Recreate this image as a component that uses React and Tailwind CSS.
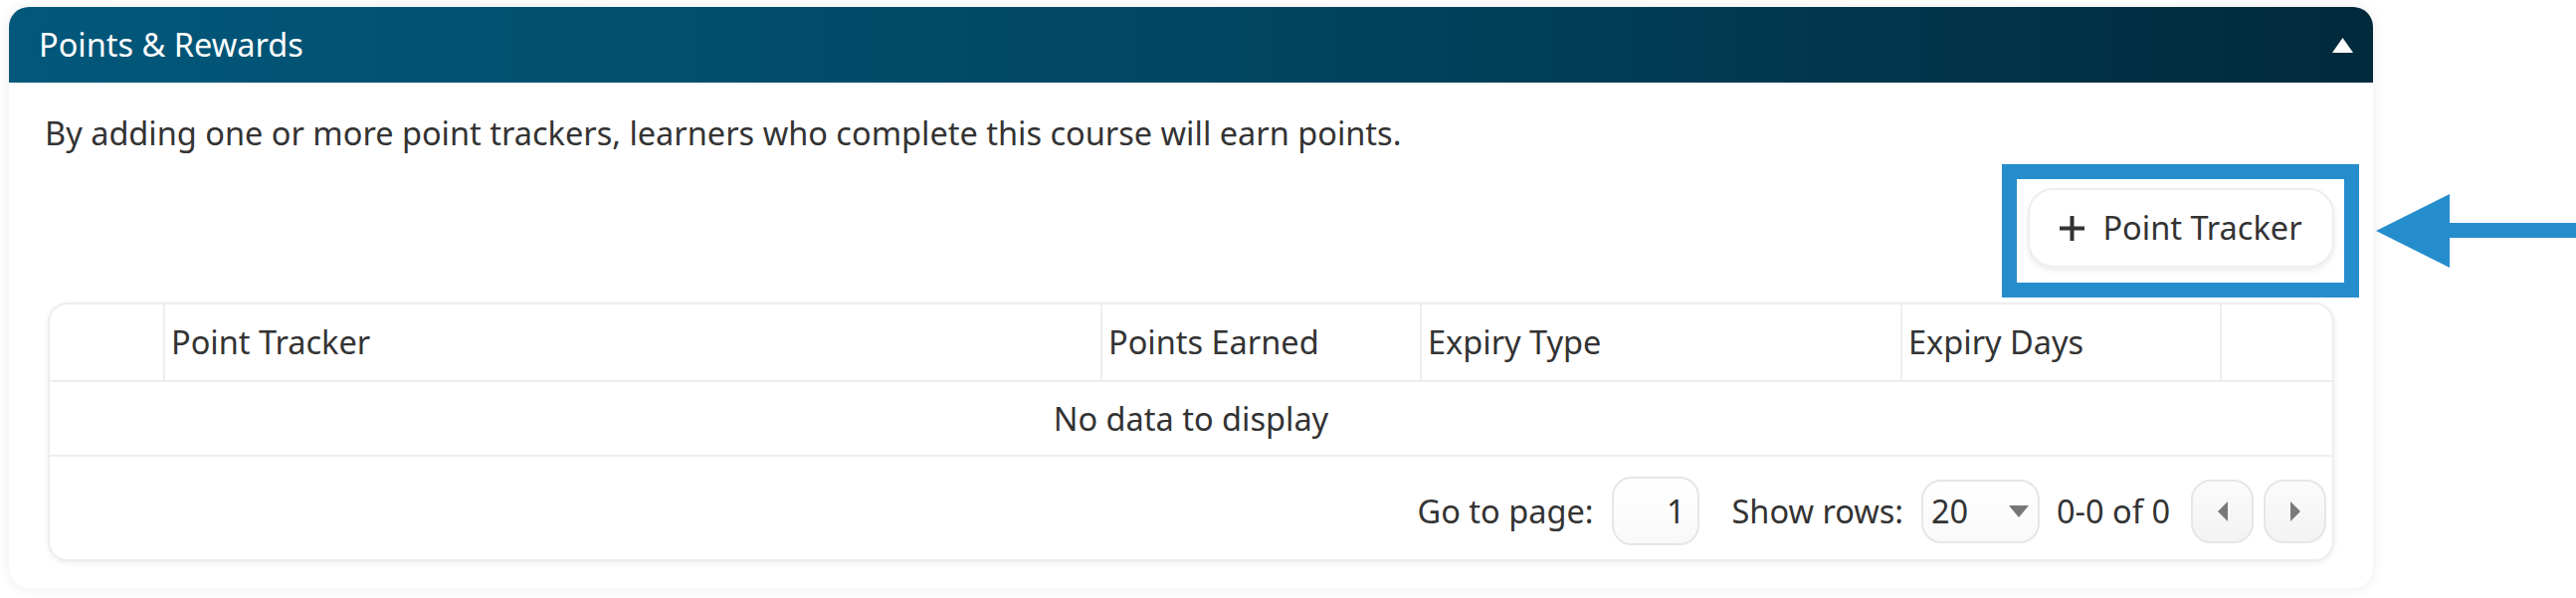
import React from 'react';

const columns = [
  { label: '', width: 'w-[116px]' },
  { label: 'Point Tracker', width: 'w-[942px]' },
  { label: 'Points Earned', width: 'w-[321px]' },
  { label: 'Expiry Type', width: 'w-[483px]' },
  { label: 'Expiry Days', width: 'w-[321px]' },
  { label: '', width: 'flex-1' },
];

function Triangle({ dir, className }) {
  // small solid triangles used in the pager and header
  const pts = {
    up: '0,15 10.5,0 21,15',
    down: '0,0 20,0 10,12',
    left: '10,0 10,20 0,10',
    right: '0,0 0,20 10,10',
  }[dir];
  const size = {
    up: [21, 15],
    down: [20, 12],
    left: [10, 20],
    right: [10, 20],
  }[dir];
  return (
    <svg width={size[0]} height={size[1]} viewBox={`0 0 ${size[0]} ${size[1]}`} className={className}>
      <polygon points={pts} fill="currentColor" />
    </svg>
  );
}

export default function App() {
  return (
    <div className="relative h-[601px] w-full overflow-hidden bg-white font-['Noto_Sans',sans-serif] text-[32.5px] leading-[44px] text-[#333333]">
      {/* card */}
      <div className="ml-[9px] mt-[7px] flex h-[584px] w-[2376px] flex-col rounded-[20px] bg-white shadow-[0_0_14px_rgba(0,0,0,0.08)]">
        <div className="flex h-[76px] shrink-0 items-center justify-between rounded-t-[20px] bg-gradient-to-r from-[#02587b] via-[#014763] to-[#012a3c] pl-[30px] pr-[20px] text-white">
          <span>Points &amp; Rewards</span>
          <Triangle dir="up" className="text-white" />
        </div>

        <div className="flex flex-1 flex-col px-[39px] pb-[27px]">
          <p className="-ml-[3px] mt-[29px]">
            By adding one or more point trackers, learners who complete this course will earn points.
          </p>

          <div className="mt-[33px] flex justify-end">
            <button className="flex h-[80px] w-[308px] items-center justify-center gap-[18px] rounded-[26px] border-2 border-[#eeeeee] bg-white shadow-[0_3px_6px_rgba(0,0,0,0.08)]">
              <svg width="25" height="25" viewBox="0 0 25 25">
                <path d="M12.5 0v25M0 12.5h25" stroke="#333" strokeWidth="4" />
              </svg>
              <span>Point Tracker</span>
            </button>
          </div>

          {/* table */}
          <div className="mt-[35px] flex h-[260px] flex-col overflow-hidden rounded-[20px] border-2 border-[#eeeeee] bg-white shadow-[0_2px_6px_rgba(0,0,0,0.07)]">
            <div className="flex h-[78px] shrink-0 border-b-2 border-[#eeeeee]">
              {columns.map((c, i) => (
                <div
                  key={i}
                  className={`${c.width} flex items-center pl-[6px] ${i < columns.length - 1 ? 'border-r-2 border-[#eeeeee]' : ''}`}
                >
                  {c.label}
                </div>
              ))}
            </div>
            <div className="flex h-[75px] shrink-0 items-center justify-center border-b-2 border-[#eeeeee]">
              No data to display
            </div>
            <div className="flex flex-1 items-center justify-end pr-[6px] pt-[6px]">
              <span>Go to page:</span>
              <div className="ml-[19px] flex h-[69px] w-[88px] items-center justify-end rounded-[20px] border-2 border-[#e6e6e6] bg-gradient-to-b from-white to-[#f9f9f9] pr-[13px]">
                1
              </div>
              <span className="ml-[32px]">Show rows:</span>
              <div className="ml-[18px] flex h-[64px] w-[119px] items-center justify-between rounded-[20px] border-2 border-[#e6e6e6] bg-gradient-to-b from-white to-[#f9f9f9] pl-[8px] pr-[9px]">
                <span>20</span>
                <Triangle dir="down" className="text-[#777777]" />
              </div>
              <span className="ml-[17px]">0-0 of 0</span>
              <div className="ml-[21px] flex h-[64px] w-[63px] items-center justify-center rounded-[20px] border-2 border-[#e6e6e6] bg-gradient-to-b from-[#fbfbfb] to-[#f3f3f3]">
                <Triangle dir="left" className="text-[#7a7a7a]" />
              </div>
              <div className="ml-[10px] flex h-[64px] w-[63px] items-center justify-center rounded-[20px] border-2 border-[#e6e6e6] bg-gradient-to-b from-[#fbfbfb] to-[#f3f3f3]">
                <Triangle dir="right" className="text-[#7a7a7a]" />
              </div>
            </div>
          </div>
        </div>
      </div>

      {/* annotation: highlight box and arrow */}
      <div className="absolute left-[2012px] top-[165px] h-[134px] w-[359px] border-[15px] border-[#268dcd]" />
      <svg className="absolute left-[2388px] top-[195px]" width="201" height="74" viewBox="0 0 201 74">
        <polygon points="0,37 74,0 74,74" fill="#268dcd" />
        <rect x="73" y="29" width="128" height="15" fill="#268dcd" />
      </svg>
    </div>
  );
}
